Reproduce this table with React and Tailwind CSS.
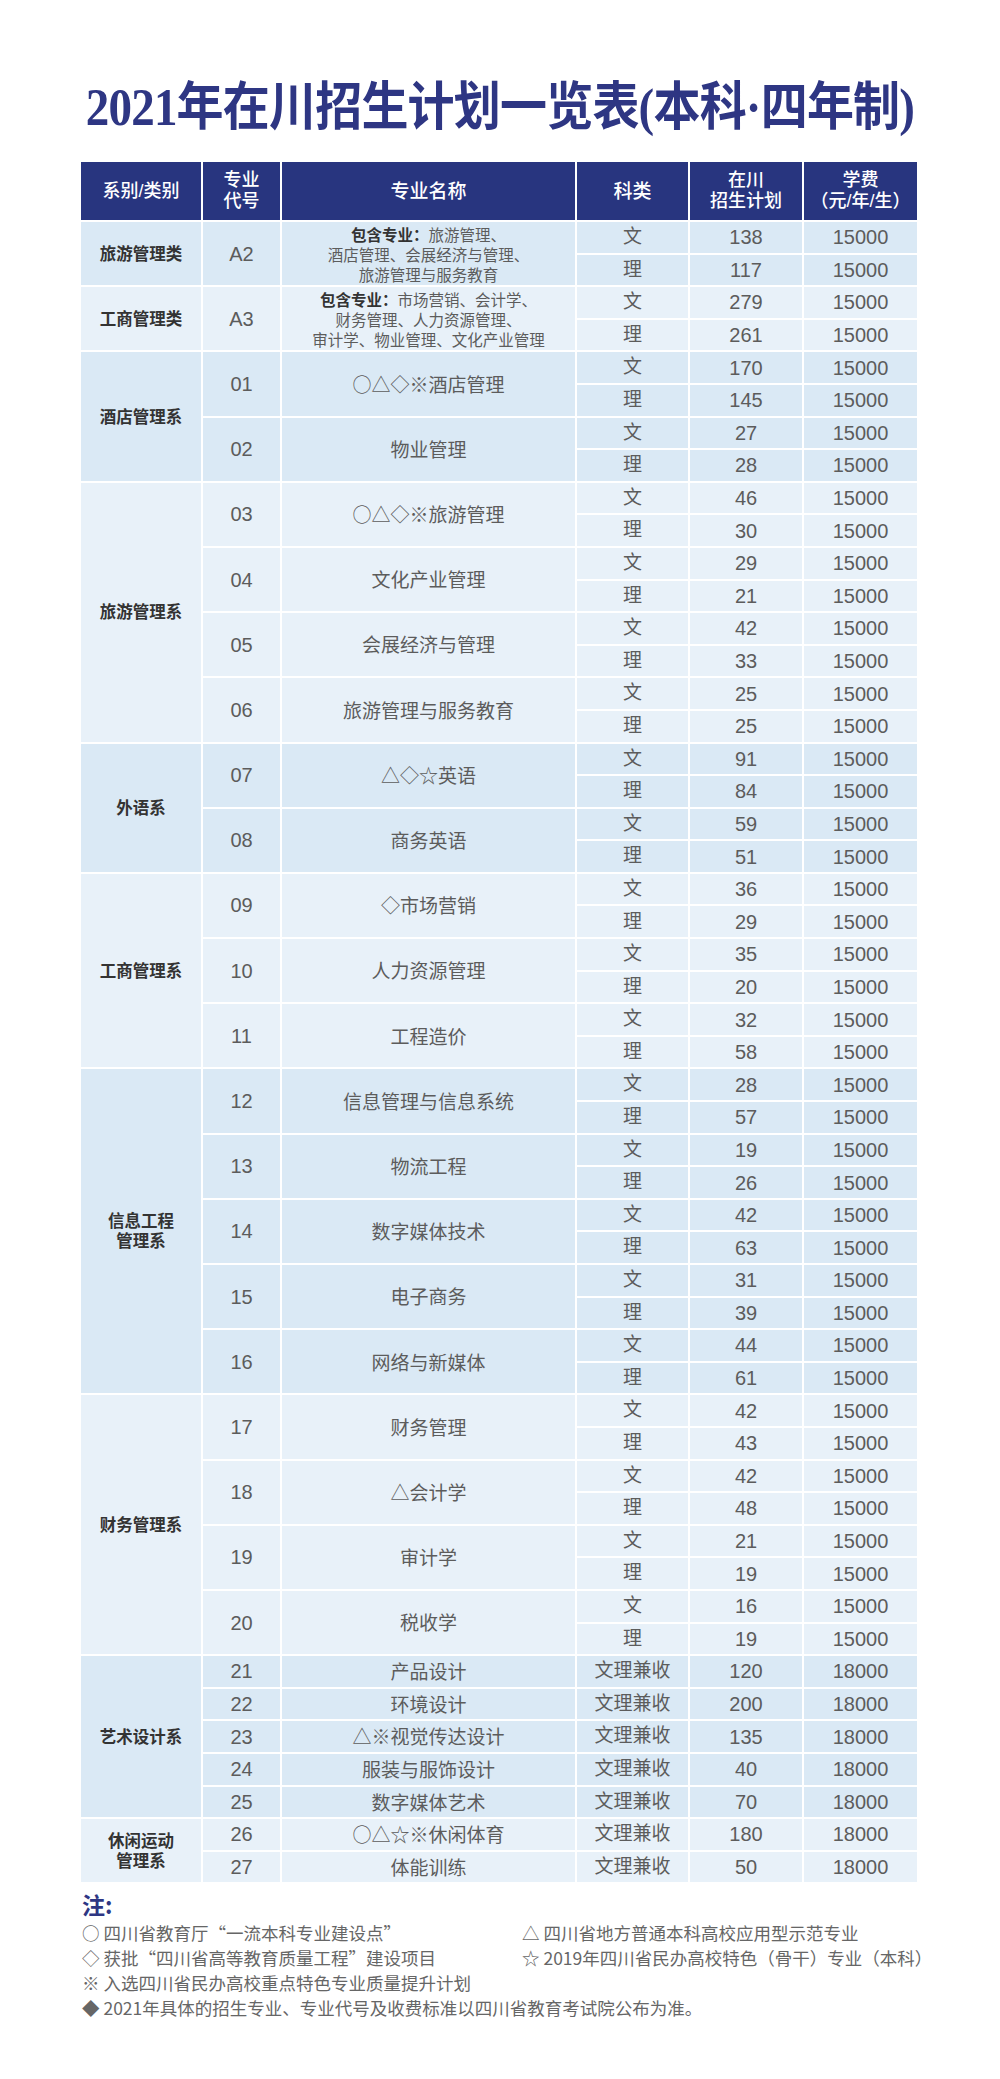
import React from "react";

const groups = [
  {
    dept: ["旅游管理类"],
    majors: [
      {
        code: "A2",
        desc: ["旅游管理、", "酒店管理、会展经济与管理、", "旅游管理与服务教育"],
        rows: [["文", "138"], ["理", "117"]],
        fee: "15000",
      },
    ],
  },
  {
    dept: ["工商管理类"],
    majors: [
      {
        code: "A3",
        desc: ["市场营销、会计学、", "财务管理、人力资源管理、", "审计学、物业管理、文化产业管理"],
        rows: [["文", "279"], ["理", "261"]],
        fee: "15000",
      },
    ],
  },
  {
    dept: ["酒店管理系"],
    majors: [
      { code: "01", name: "○△◇※酒店管理", rows: [["文", "170"], ["理", "145"]], fee: "15000" },
      { code: "02", name: "物业管理", rows: [["文", "27"], ["理", "28"]], fee: "15000" },
    ],
  },
  {
    dept: ["旅游管理系"],
    majors: [
      { code: "03", name: "○△◇※旅游管理", rows: [["文", "46"], ["理", "30"]], fee: "15000" },
      { code: "04", name: "文化产业管理", rows: [["文", "29"], ["理", "21"]], fee: "15000" },
      { code: "05", name: "会展经济与管理", rows: [["文", "42"], ["理", "33"]], fee: "15000" },
      { code: "06", name: "旅游管理与服务教育", rows: [["文", "25"], ["理", "25"]], fee: "15000" },
    ],
  },
  {
    dept: ["外语系"],
    majors: [
      { code: "07", name: "△◇☆英语", rows: [["文", "91"], ["理", "84"]], fee: "15000" },
      { code: "08", name: "商务英语", rows: [["文", "59"], ["理", "51"]], fee: "15000" },
    ],
  },
  {
    dept: ["工商管理系"],
    majors: [
      { code: "09", name: "◇市场营销", rows: [["文", "36"], ["理", "29"]], fee: "15000" },
      { code: "10", name: "人力资源管理", rows: [["文", "35"], ["理", "20"]], fee: "15000" },
      { code: "11", name: "工程造价", rows: [["文", "32"], ["理", "58"]], fee: "15000" },
    ],
  },
  {
    dept: ["信息工程", "管理系"],
    majors: [
      { code: "12", name: "信息管理与信息系统", rows: [["文", "28"], ["理", "57"]], fee: "15000" },
      { code: "13", name: "物流工程", rows: [["文", "19"], ["理", "26"]], fee: "15000" },
      { code: "14", name: "数字媒体技术", rows: [["文", "42"], ["理", "63"]], fee: "15000" },
      { code: "15", name: "电子商务", rows: [["文", "31"], ["理", "39"]], fee: "15000" },
      { code: "16", name: "网络与新媒体", rows: [["文", "44"], ["理", "61"]], fee: "15000" },
    ],
  },
  {
    dept: ["财务管理系"],
    majors: [
      { code: "17", name: "财务管理", rows: [["文", "42"], ["理", "43"]], fee: "15000" },
      { code: "18", name: "△会计学", rows: [["文", "42"], ["理", "48"]], fee: "15000" },
      { code: "19", name: "审计学", rows: [["文", "21"], ["理", "19"]], fee: "15000" },
      { code: "20", name: "税收学", rows: [["文", "16"], ["理", "19"]], fee: "15000" },
    ],
  },
  {
    dept: ["艺术设计系"],
    majors: [
      { code: "21", name: "产品设计", rows: [["文理兼收", "120"]], fee: "18000" },
      { code: "22", name: "环境设计", rows: [["文理兼收", "200"]], fee: "18000" },
      { code: "23", name: "△※视觉传达设计", rows: [["文理兼收", "135"]], fee: "18000" },
      { code: "24", name: "服装与服饰设计", rows: [["文理兼收", "40"]], fee: "18000" },
      { code: "25", name: "数字媒体艺术", rows: [["文理兼收", "70"]], fee: "18000" },
    ],
  },
  {
    dept: ["休闲运动", "管理系"],
    majors: [
      { code: "26", name: "○△☆※休闲体育", rows: [["文理兼收", "180"]], fee: "18000" },
      { code: "27", name: "体能训练", rows: [["文理兼收", "50"]], fee: "18000" },
    ],
  },
];

const SPAN = {
  1: "row-span-1",
  2: "row-span-2",
  4: "row-span-4",
  5: "row-span-5",
  6: "row-span-6",
  8: "row-span-8",
  10: "row-span-10",
};

const BG = ["bg-[#dae9f5]", "bg-[#e8f1f9]"];

const cell = "flex items-center justify-center text-center";
const CJK = { fontFamily: '"Noto Sans CJK SC", sans-serif' };

function Header() {
  const h = `${cell} bg-[#28357f] text-white text-[18px] leading-[21px] font-medium`;
  return (
    <>
      <div className={h}>系别/类别</div>
      <div className={h}>
        专业
        <br />
        代号
      </div>
      <div className={`${h} text-[19px]`}>专业名称</div>
      <div className={`${h} text-[19px]`}>科类</div>
      <div className={h}>
        在川
        <br />
        招生计划
      </div>
      <div className={h}>
        学费
        <br />
        （元/年/生）
      </div>
    </>
  );
}

function Body() {
  const out = [];
  groups.forEach((g, gi) => {
    const bg = BG[gi % 2];
    const total = g.majors.reduce((s, m) => s + m.rows.length, 0);
    g.majors.forEach((m, mi) => {
      const n = m.rows.length;
      m.rows.forEach((r, ri) => {
        if (mi === 0 && ri === 0) {
          out.push(
            <div
              key={`d${gi}`}
              className={`${cell} ${bg} ${SPAN[total]} flex-col font-bold text-[16.5px] leading-[20px] text-[#333]`}
            >
              {g.dept.map((d) => (
                <span key={d}>{d}</span>
              ))}
            </div>
          );
        }
        if (ri === 0) {
          out.push(
            <div key={`c${gi}-${mi}`} className={`${cell} ${bg} ${SPAN[n]} text-[20px] text-[#5c5c5c]`}>
              {m.code}
            </div>
          );
          out.push(
            <div
              key={`n${gi}-${mi}`}
              style={CJK}
              className={`${cell} ${bg} ${SPAN[n]} ${
                m.desc ? "flex-col text-[15.5px] leading-[20px]" : "text-[19px]"
              } text-[#5c5c5c]`}
            >
              {m.desc ? (
                m.desc.map((line, li) => (
                  <span key={li} className="block h-[20px]">
                    {li === 0 && <b className="font-bold text-[#333]">包含专业：</b>}
                    {line}
                  </span>
                ))
              ) : (
                m.name
              )}
            </div>
          );
        }
        out.push(
          <div key={`k${gi}-${mi}-${ri}`} className={`${cell} ${bg} text-[19px] text-[#5c5c5c]`}>
            {r[0]}
          </div>
        );
        out.push(
          <div key={`p${gi}-${mi}-${ri}`} className={`${cell} ${bg} text-[20px] text-[#5c5c5c]`}>
            {r[1]}
          </div>
        );
        out.push(
          <div key={`f${gi}-${mi}-${ri}`} className={`${cell} ${bg} text-[20px] text-[#5c5c5c]`}>
            {m.fee}
          </div>
        );
      });
    });
  });
  return out;
}

export default function App() {
  return (
    <div
      className="w-[1000px] h-[2079px] bg-white overflow-hidden"
      style={{ fontFamily: '"Liberation Sans", "Noto Sans CJK SC", sans-serif' }}
    >
      <div className="h-[162px] pt-[78px]">
        <h1
          className="text-center text-[47px] leading-[58px] font-bold text-[#2e3683] scale-y-[1.12] tracking-[-0.8px]"
          style={{ fontFamily: '"Liberation Serif", "Noto Sans CJK SC", serif' }}
        >
          2021年在川招生计划一览表(本科·四年制)
        </h1>
      </div>

      <div className="ml-[81px] w-[836px] grid grid-cols-[120px_77px_293px_111px_112px_113px] grid-rows-[58px] auto-rows-[30.6px] gap-[2px]">
        <Header />
        <Body />
      </div>

      <div className="ml-[82px] mt-[9px] w-[900px]" style={CJK}>
        <div className="text-[23px] leading-[27px] font-bold text-[#2e3683]">注:</div>
        <div className="grid grid-cols-[440px_1fr] text-[17.5px] leading-[25px] text-[#666] mt-[2px]">
          <div>○ 四川省教育厅“一流本科专业建设点”</div>
          <div>△ 四川省地方普通本科高校应用型示范专业</div>
          <div>◇ 获批“四川省高等教育质量工程”建设项目</div>
          <div>☆ 2019年四川省民办高校特色（骨干）专业（本科）</div>
          <div className="col-span-2">※ 入选四川省民办高校重点特色专业质量提升计划</div>
          <div className="col-span-2">◆ 2021年具体的招生专业、专业代号及收费标准以四川省教育考试院公布为准。</div>
        </div>
      </div>
    </div>
  );
}
